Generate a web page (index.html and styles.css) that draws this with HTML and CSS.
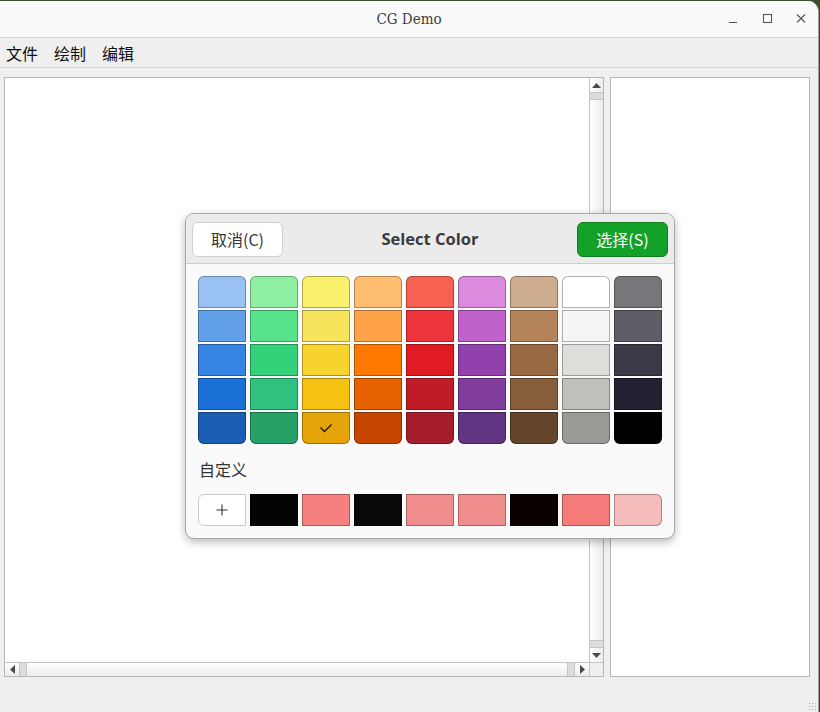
FILE: index.html
```html
<!DOCTYPE html>
<html lang="zh">
<head>
<meta charset="utf-8">
<title>CG Demo</title>
<link rel="stylesheet" href="styles.css">
</head>
<body>
<div class="window">
  <header class="titlebar">
    <div></div>
    <div class="title">CG Demo</div>
    <div class="controls">
      <svg class="ctl" width="14" height="14" viewBox="0 0 14 14"><path d="M3 10.5h8" stroke="#555" stroke-width="1.2"/></svg>
      <svg class="ctl" width="14" height="14" viewBox="0 0 14 14"><rect x="3.5" y="2.5" width="8" height="8" fill="none" stroke="#555" stroke-width="1.1"/></svg>
      <svg class="ctl" width="14" height="14" viewBox="0 0 14 14"><path d="M3 2.5l8 8M11 2.5l-8 8" stroke="#555" stroke-width="1.1"/></svg>
    </div>
  </header>
  <nav class="menubar">
    <span>文件</span><span>绘制</span><span>编辑</span>
  </nav>
  <main class="content">
    <section class="canvas-panel">
      <div class="canvas"></div>
      <div class="vscroll">
        <div class="arrow"><svg width="9" height="5" viewBox="0 0 9 5"><path d="M0 5L4.5 0L9 5z" fill="#4a4a4a"/></svg></div>
        <div class="vhandle"></div>
        <div class="track"></div>
        <div class="vhandle"></div>
        <div class="arrow"><svg width="9" height="5" viewBox="0 0 9 5"><path d="M0 0L4.5 5L9 0z" fill="#4a4a4a"/></svg></div>
      </div>
      <div class="hscroll">
        <div class="harrow"><svg width="5" height="9" viewBox="0 0 5 9"><path d="M5 0L0 4.5L5 9z" fill="#4a4a4a"/></svg></div>
        <div class="hhandle"></div>
        <div class="htrack"></div>
        <div class="hhandle"></div>
        <div class="harrow"><svg width="5" height="9" viewBox="0 0 5 9"><path d="M0 0L5 4.5L0 9z" fill="#4a4a4a"/></svg></div>
      </div>
      <div class="corner"></div>
    </section>
    <section class="side-panel"></section>
  </main>
  <div class="grip"></div>

  <div class="dialog">
    <div class="dlg-head">
      <button class="btn cancel">取消(C)</button>
      <div class="dlg-title">Select Color</div>
      <button class="btn select">选择(S)</button>
    </div>
    <div class="dlg-body">
      <div class="palette">
        <div class="col"><div class="sw" style="background:#99c1f1"></div><div class="sw" style="background:#62a0ea"></div><div class="sw" style="background:#3584e4"></div><div class="sw" style="background:#1c71d8"></div><div class="sw" style="background:#1a5fb4"></div></div>
        <div class="col"><div class="sw" style="background:#8ff0a4"></div><div class="sw" style="background:#57e389"></div><div class="sw" style="background:#33d17a"></div><div class="sw" style="background:#2ec27e"></div><div class="sw" style="background:#26a269"></div></div>
        <div class="col"><div class="sw" style="background:#f9f06b"></div><div class="sw" style="background:#f8e45c"></div><div class="sw" style="background:#f6d32d"></div><div class="sw" style="background:#f5c211"></div><div class="sw checked" style="background:#e5a50a"><svg width="14" height="10" viewBox="0 0 14 10"><path d="M1.5 4.5L5.5 8.5L12.5 1.5" fill="none" stroke="#1a1a1a" stroke-width="1.4"/></svg></div></div>
        <div class="col"><div class="sw" style="background:#ffbe6f"></div><div class="sw" style="background:#ffa348"></div><div class="sw" style="background:#ff7800"></div><div class="sw" style="background:#e66100"></div><div class="sw" style="background:#c64600"></div></div>
        <div class="col"><div class="sw" style="background:#f66151"></div><div class="sw" style="background:#ed333b"></div><div class="sw" style="background:#e01b24"></div><div class="sw" style="background:#c01c28"></div><div class="sw" style="background:#a51d2d"></div></div>
        <div class="col"><div class="sw" style="background:#dc8add"></div><div class="sw" style="background:#c061cb"></div><div class="sw" style="background:#9141ac"></div><div class="sw" style="background:#813d9c"></div><div class="sw" style="background:#613583"></div></div>
        <div class="col"><div class="sw" style="background:#cdab8f"></div><div class="sw" style="background:#b5835a"></div><div class="sw" style="background:#986a44"></div><div class="sw" style="background:#865e3c"></div><div class="sw" style="background:#63452c"></div></div>
        <div class="col"><div class="sw" style="background:#ffffff"></div><div class="sw" style="background:#f6f5f4"></div><div class="sw" style="background:#deddda"></div><div class="sw" style="background:#c0bfbc"></div><div class="sw" style="background:#9a9996"></div></div>
        <div class="col"><div class="sw" style="background:#77767b"></div><div class="sw" style="background:#5e5c64"></div><div class="sw" style="background:#3d3846"></div><div class="sw" style="background:#241f31"></div><div class="sw" style="background:#000000"></div></div>
      </div>
      <div class="custom-label">自定义</div>
      <div class="custom-row">
        <div class="add"><svg width="12" height="12" viewBox="0 0 12 12"><path d="M6 0.5v11M0.5 6h11" stroke="#333" stroke-width="1.1"/></svg></div>
        <div class="sw" style="background:#030303"></div>
        <div class="sw" style="background:#f67f7f"></div>
        <div class="sw" style="background:#080808"></div>
        <div class="sw" style="background:#f08d8d"></div>
        <div class="sw" style="background:#f08d8d"></div>
        <div class="sw" style="background:#0a0000"></div>
        <div class="sw" style="background:#f67b7b"></div>
        <div class="sw last" style="background:#f5bcbc"></div>
      </div>
    </div>
  </div>
</div>
</body>
</html>
```

FILE: styles.css
```css
* { box-sizing: border-box; }
html, body { margin: 0; padding: 0; }
body {
  width: 820px;
  height: 712px;
  overflow: hidden;
  background: #3f4d2f;
}
.window {
  position: relative;
  width: 819px;
  height: 711px;
  margin-top: 1px;
  background: #efefef;
  border-top-right-radius: 11px;
  border-right: 1px solid #9c9c9c;
  display: flex;
  flex-direction: column;
  overflow: hidden;
}
.titlebar {
  height: 37px;
  background: #fafafa;
  border-bottom: 1px solid #d6d6d6;
  display: grid;
  grid-template-columns: 1fr auto 1fr;
  align-items: center;
}
.title {
  font-family: "DejaVu Serif", "Liberation Serif", serif;
  font-stretch: condensed;
  font-size: 15px;
  color: #3c3c3c;
  padding-bottom: 1px;
}
.controls {
  display: flex;
  justify-content: flex-end;
  gap: 20px;
  padding-right: 10px;
}
.menubar {
  height: 30px;
  border-bottom: 1px solid #d2d2d2;
  display: flex;
  align-items: center;
  gap: 16px;
  padding-left: 6px;
  font-family: "Noto Sans CJK SC", sans-serif;
  font-size: 16px;
  color: #111;
}
.content {
  flex: 1;
  display: flex;
  gap: 6px;
  padding: 9px 0 0 4px;
}
.canvas-panel {
  width: 600px;
  height: 600px;
  border: 1px solid #b6b6b6;
  display: grid;
  grid-template-columns: 1fr 14px;
  grid-template-rows: 1fr 14px;
  background: #fff;
}
.canvas { background: #fff; }
.vscroll {
  display: flex;
  flex-direction: column;
  border-left: 1px solid #c4c4c4;
  background: linear-gradient(to right, #ffffff, #ececec);
}
.arrow {
  height: 14px;
  display: flex;
  align-items: center;
  justify-content: center;
}
.vhandle {
  height: 8px;
  background: #dcdcdc;
  border-top: 1px solid #c6c6c6;
  border-bottom: 1px solid #c6c6c6;
}
.track { flex: 1; }
.hscroll {
  display: flex;
  border-top: 1px solid #c4c4c4;
  background: linear-gradient(to bottom, #ffffff, #ececec);
}
.harrow {
  width: 14px;
  display: flex;
  align-items: center;
  justify-content: center;
}
.hhandle {
  width: 8px;
  background: #dcdcdc;
  border-left: 1px solid #c6c6c6;
  border-right: 1px solid #c6c6c6;
}
.htrack { flex: 1; }
.corner {
  background: #efefef;
  border-top: 1px solid #c4c4c4;
  border-left: 1px solid #c4c4c4;
}
.side-panel {
  width: 200px;
  height: 600px;
  border: 1px solid #b6b6b6;
  background: #fff;
}
.grip {
  position: absolute;
  right: 1px;
  bottom: 1px;
  width: 9px;
  height: 9px;
  background-image: radial-gradient(circle, #b0b0b0 0.8px, transparent 1px);
  background-size: 3px 3px;
}

/* dialog */
.dialog {
  position: absolute;
  left: 185px;
  top: 212px;
  width: 490px;
  height: 326px;
  background: #fafafa;
  border: 1px solid #a8a8a8;
  border-radius: 9px;
  box-shadow: 0 3px 8px rgba(0,0,0,0.28);
  overflow: hidden;
  font-family: "Noto Sans CJK SC", sans-serif;
}
.dlg-head {
  height: 50px;
  background: #ebebeb;
  border-bottom: 1px solid #cfcfcf;
  display: flex;
  align-items: center;
  justify-content: space-between;
  padding: 0 6px;
}
.btn {
  width: 91px;
  height: 35px;
  border-radius: 6px;
  font-family: "Noto Sans CJK SC", sans-serif;
  font-size: 16px;
  padding: 0;
  margin-top: 1px;
}
.cancel {
  background: #ffffff;
  border: 1px solid #cfcfcf;
  color: #333;
}
.select {
  background: #13a12a;
  border: 1px solid #0f7c20;
  color: #ffffff;
}
.dlg-title {
  font-family: "Open Sans", "Noto Sans", sans-serif;
  font-weight: 700;
  font-size: 16.5px;
  color: #3a3a3a;
}
.dlg-body {
  padding: 12px 12px 0 12px;
}
.palette {
  display: flex;
  gap: 4px;
}
.col {
  display: flex;
  flex-direction: column;
  gap: 2px;
}
.sw {
  width: 48px;
  height: 32px;
  box-shadow: inset 0 0 0 1px rgba(0,0,0,0.3);
}
.col .sw:first-child { border-radius: 6px 6px 0 0; }
.col .sw:last-child { border-radius: 0 0 6px 6px; }
.checked {
  display: flex;
  align-items: center;
  justify-content: center;
}
.custom-label {
  margin-top: 14px;
  height: 22px;
  line-height: 22px;
  font-size: 16px;
  color: #333;
  padding-left: 1px;
}
.custom-row {
  margin-top: 14px;
  display: flex;
  gap: 4px;
}
.add {
  width: 48px;
  height: 32px;
  background: #fff;
  border: 1px solid #cacaca;
  border-radius: 6px 0 0 6px;
  display: flex;
  align-items: center;
  justify-content: center;
}
.custom-row .last { border-radius: 0 6px 6px 0; }
```
